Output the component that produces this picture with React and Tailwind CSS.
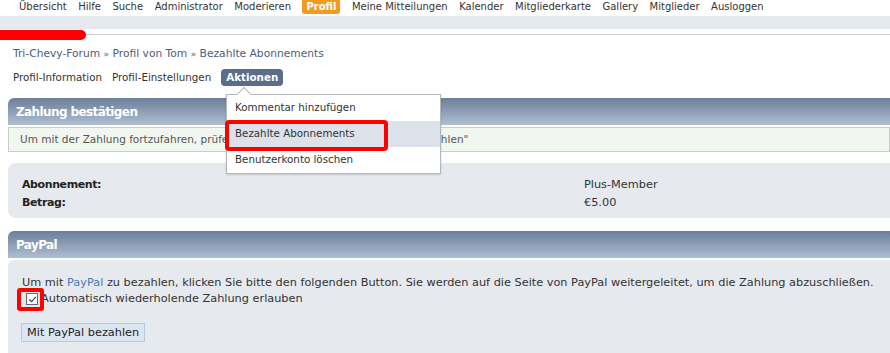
import React from 'react';

const NAV = ["Übersicht", "Hilfe", "Suche", "Administrator", "Moderieren", "Profil", "Meine Mitteilungen", "Kalender", "Mitgliederkarte", "Gallery", "Mitglieder", "Ausloggen"];

const SectionHeader = ({ title }) => (
    <div className="h-[27px] rounded-tl-[6px] bg-gradient-to-b from-[#6c7f99] to-[#afbfd3] px-2 flex items-center">
        <span className="text-[12px] font-bold tracking-[-0.6px] text-white">{title}</span>
    </div>
);

export default function App() {
    return (
        <div className="relative w-[890px] h-[353px] overflow-hidden bg-white text-[11px] text-[#333] font-['DejaVu_Sans',Verdana,sans-serif]">
            {/* Top nav */}
            <div className="flex items-center gap-[11.5px] pl-[19px] h-[14px] text-[10px]">
                {NAV.map(item => item === "Profil" ? (
                    <span key={item} className="bg-[#f39a22] text-white font-bold px-[4px] rounded-b-[3px] leading-[14px]">{item}</span>
                ) : (
                    <span key={item} className="leading-[14px]">{item}</span>
                ))}
            </div>
            <div className="h-[13px] mt-[2px] bg-[#e5eaf1]" />
            <div className="h-[5px]" />
            <div className="relative border-t border-[#cfd3d8]">
                <div className="absolute left-0 -top-[5px] w-[86px] h-[10px] bg-[#ff0000] rounded-r-full" />
            </div>

            {/* Breadcrumb */}
            <div className="pl-[13px] mt-[11px] text-[10.7px] text-[#4e5d78]">
                Tri-Chevy-Forum <span className="text-[9px]">»</span> Profil von Tom <span className="text-[9px]">»</span> Bezahlte Abonnements
            </div>

            {/* Tabs */}
            <div className="flex items-center gap-[10px] pl-[13px] mt-[7px] text-[10.3px]">
                <span>Profil-Information</span>
                <span>Profil-Einstellungen</span>
                <span className="bg-[#5a6d8b] text-white font-bold px-[5px] h-[17px] leading-[17px] rounded-[4px]">Aktionen</span>
            </div>

            {/* Zahlung bestätigen */}
            <div className="ml-[8px] mt-[12px]">
                <SectionHeader title="Zahlung bestätigen" />
                <div className="mt-[2px] h-[25px] border border-[#c9ccc9] bg-[#f1f7f0] flex items-center pl-[11px] text-[10.5px] text-[#555] whitespace-nowrap">
                    Um mit der Zahlung fortzufahren, prüfen Sie die Angaben und klicken auf "Bezahlen"
                </div>
                <div className="mt-[11px] h-[55px] bg-[#e6e9ee] rounded-tl-[8px] rounded-bl-[8px] pl-[14px] pt-[13px] leading-[18px]">
                    <div className="flex"><span className="w-[562px] font-bold tracking-[-0.4px] text-[#222]">Abonnement:</span><span className="text-[11.3px]">Plus-Member</span></div>
                    <div className="flex"><span className="w-[562px] font-bold tracking-[-0.4px] text-[#222]">Betrag:</span><span className="text-[11.3px]">€5.00</span></div>
                </div>
            </div>

            {/* PayPal */}
            <div className="ml-[8px] mt-[13px]">
                <SectionHeader title="PayPal" />
                <div className="mt-[2px] h-[95px] bg-[#e6e9ee] rounded-tl-[6px] pl-[14px] pt-[15px] leading-[16px] text-[11.3px]">
                    <div className="whitespace-nowrap">
                        Um mit <span className="text-[#4a7bb5]">PayPal</span> zu bezahlen, klicken Sie bitte den folgenden Button. Sie werden auf die Seite von PayPal weitergeleitet, um die Zahlung abzuschließen.
                    </div>
                    <div className="flex items-center gap-[3px]">
                        <span className="relative inline-flex ml-[4px]">
                            <span className="w-[12px] h-[12px] border border-[#666] bg-white flex items-center justify-center">
                                <svg viewBox="0 0 10 10" className="w-[9px] h-[9px]"><path d="M1.5 5 L4 7.5 L8.5 2" fill="none" stroke="#333" strokeWidth="1.2" /></svg>
                            </span>
                            <span className="absolute -left-[9px] -top-[5px] w-[27px] h-[23px] border-[4px] border-[#ff0000] rounded-[3px]" />
                        </span>
                        <span>Automatisch wiederholende Zahlung erlauben</span>
                    </div>
                    <button className="mt-[16px] ml-[-1px] h-[19px] px-[5px] bg-[#dbe6f2] border border-[#b7c9de] text-[#222] leading-[17px]">Mit PayPal bezahlen</button>
                </div>
            </div>

            {/* Dropdown menu */}
            <div className="absolute left-[226px] top-[94px] w-[215px] bg-white border border-[#b3b8bf] text-[10.3px] shadow-[0_1px_2px_rgba(0,0,0,0.15)]">
                <div className="absolute left-[12px] -top-[6px] w-[10px] h-[10px] bg-white border-l border-t border-[#b3b8bf] rotate-45" />
                <div className="relative h-[26px] flex items-center pl-[8px]">Kommentar hinzufügen</div>
                <div className="relative h-[26px] flex items-center pl-[8px] bg-[#dde2ea]">
                    Bezahlte Abonnements
                    <span className="absolute -left-[2px] -top-[1px] w-[163px] h-[31px] border-[4px] border-[#ff0000] rounded-[4px]" />
                </div>
                <div className="relative h-[26px] flex items-center pl-[8px]">Benutzerkonto löschen</div>
            </div>
        </div>
    );
}
